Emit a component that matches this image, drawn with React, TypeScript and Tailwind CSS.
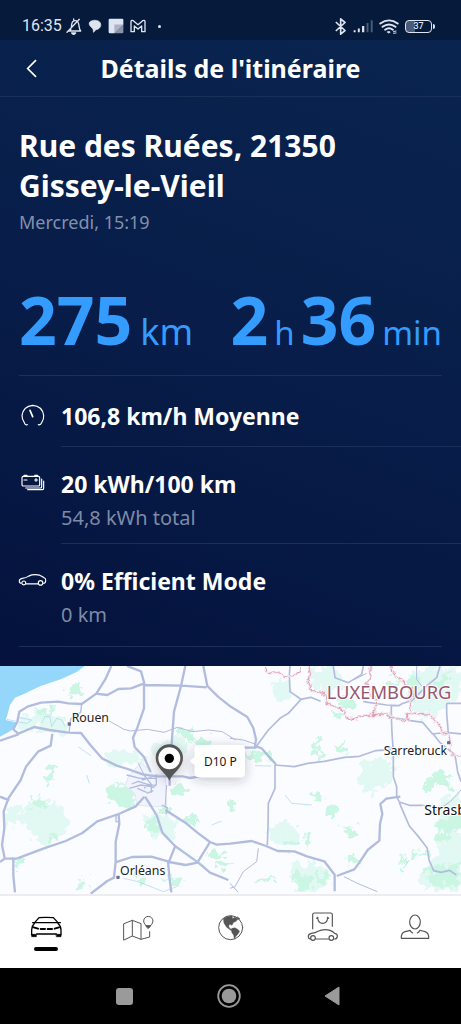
import type { ReactNode } from "react";

type IconProps = { box: string; className: string; children: ReactNode; stroke?: number };

function Icon({ box, className, children, stroke = 4 }: IconProps) {
  return (
    <svg
      viewBox={box}
      className={className}
      fill="none"
      stroke="currentColor"
      strokeWidth={stroke}
      strokeLinecap="round"
      strokeLinejoin="round"
      aria-hidden="true"
    >
      {children}
    </svg>
  );
}

function StatusBar() {
  return (
    <div className="flex h-10 items-center justify-between bg-[#061a3b] pt-3 pr-[26px] pl-[22px] font-[Roboto,sans-serif] text-[#dfe5f0]">
      <div className="flex items-center">
        <span className="text-[16px] leading-5">16:35</span>
        <Icon box="196 52 48 51" className="ml-1 h-[17px] w-4" stroke={4}>
          <path d="M204 91h34M208 91c5-7 4-13 5-20 1-7 5-11 11-11 8 0 10 7 11 15 1 7 1 12 5 16M219 57v-2M199 95L236 56" />
          <path d="M213 97h12l-6 5z" fill="currentColor" />
        </Icon>
        <Icon box="262 56 42 42" className="ml-[6px] size-[14px]" stroke={2}>
          <path d="M272 80c-8-4-9-16 0-18 8-4 23-3 27 6 5 10-4 20-14 20-2 4-4 6-7 8 1-6-1-11-6-16z" fill="currentColor" />
        </Icon>
        <Icon box="322 52 50 50" className="ml-[6px] size-4" stroke={0}>
          <path d="M328 54h38q4 0 4 4v14L342 100h-14q-4 0-4-4V58q0-4 4-4z" fill="currentColor" />
          <path d="M370 72L342 100h24q4 0 4-4z" fill="#8893a8" />
          <path d="M342 72h28L342 100z" fill="#a9b3c4" />
        </Icon>
        <Icon box="388 56 48 42" className="ml-[6px] h-[14px] w-4" stroke={4}>
          <path d="M391 94V63q1-5 7-2l14 12 14-12q6-3 7 2v31h-10V77l-11 9-11-9v17z" />
        </Icon>
        <span className="ml-3 size-[3px] rounded-full bg-[#dfe5f0]" />
      </div>
      <div className="flex items-center gap-[6px]">
        <Icon box="314 52 36 50" className="h-[17px] w-3" stroke={5}>
          <path d="M318 65l26 24-13 11V54l13 11-26 24" />
        </Icon>
        <Icon box="365 56 62 42" className="h-[14px] w-5" stroke={0}>
          <path d="M367 90h6v6h-6zM380 85h6v11h-6zM393 77h7v19h-7z" fill="currentColor" />
          <path d="M407 68h6v28h-6zM420 59h6v37h-6z" fill="#4b5c7a" />
        </Icon>
        <Icon box="442 54 62 46" className="h-[15px] w-5" stroke={6}>
          <path d="M446 68q27-20 54 0M453 78q20-15 40 0M461 87q12-9 24 0" />
          <path d="M468 94l5 4 4-4q-4-4-9 0z" fill="currentColor" strokeWidth={2} />
          <path d="M487 93l8-2M487 98l8-1" strokeWidth={3} />
        </Icon>
        <span className="flex items-center">
          <span className="flex h-[13px] w-[27px] items-center justify-center rounded-[4px] border border-[#dfe5f0] bg-gradient-to-r from-[#4b5c7a] from-35% to-transparent to-35% text-[9px] leading-[11px] font-medium">
            37
          </span>
          <span className="ml-px h-[5px] w-[2px] rounded-r bg-[#dfe5f0]" />
        </span>
      </div>
    </div>
  );
}

function Row({ icon, title, detail, last }: { icon: ReactNode; title: string; detail?: string; last?: boolean }) {
  return (
    <li className="flex">
      <div className={detail ? "flex w-[61px] shrink-0 pt-[22px] pl-[18px]" : "flex w-[61px] shrink-0 pt-[26px] pl-[18px]"}>
        <div className="flex h-[26px] w-[29px] items-center justify-center">{icon}</div>
      </div>
      <div
        className={
          last
            ? "grow pt-[19px] pb-[18px]"
            : detail
              ? "grow border-b border-[#1c2f58] pt-[19px] pb-3"
              : "grow border-b border-[#1c2f58] pt-[22px] pb-3"
        }
      >
        <h2 className="text-[23px] leading-9 font-bold text-white">{title}</h2>
        {detail && <p className="mt-[3px] text-[20px] leading-[26px] text-[#7e8aa6]">{detail}</p>}
      </div>
    </li>
  );
}

function TripMap() {
  return (
    <section aria-label="Carte" className="bg-[#fbfcff]">
      <svg viewBox="0 18 1383 684" className="block w-full font-['Noto_Sans',sans-serif]" role="img" aria-label="Carte du trajet">
        <defs>
          <filter id="rough" x="0" y="0" width="1" height="1">
            <feTurbulence type="fractalNoise" baseFrequency="0.04" numOctaves="4" seed="4" />
            <feDisplacementMap in="SourceGraphic" scale="60" xChannelSelector="R" yChannelSelector="G" />
          </filter>
          <filter id="jagged" x="0" y="0" width="1" height="1">
            <feTurbulence type="fractalNoise" baseFrequency="0.06" numOctaves="3" seed="9" />
            <feDisplacementMap in="SourceGraphic" scale="22" xChannelSelector="R" yChannelSelector="G" />
          </filter>
          <filter id="shade" x="-40%" y="-40%" width="180%" height="190%">
            <feDropShadow dx="0" dy="8" stdDeviation="16" floodColor="#334" floodOpacity="0.28" />
          </filter>
        </defs>
        <rect y="18" width="1383" height="684" fill="#fbfcff" />
        <path d="M0 18h254l-24 18-44 20-66 23-47 22-28 12-15 22-8 30-5 15 36 8-20 24-33 18z" fill="#94d7fb" />
        <g filter="url(#rough)">
          <g fill="#e2f8f2">
            <path d="M70 172l50-18 65 12 27 25v28l-50 2-50-16-60 10 8-28z" />
            <path d="M310 285l45-20 55 8 24 28-40 16-70-4z" />
            <path d="M60 460l40-40 50 0 45 30 10 50-35 45-45 12-40-50z" />
            <path d="M425 470l40-15 60 20 8 45-30 15-40-10-20-30z" />
            <path d="M930 25l80 0 30 40-40 35-50-15-30-30z" />
            <path d="M1090 310l40-20 50 10-4 70-60 30-40-30z" />
            <path d="M805 510l50-25 40 20 5 50-50 10-45-25z" />
            <path d="M880 620l50-20 60 35 5 50-100 10-25-40z" />
            <path d="M1230 40l80-20 70 10v70l-90 80-60-40z" />
            <path d="M1300 440l83-50v300h-110l-10-60 60-60z" />
            <path d="M815 75l40-20 20 30-10 35-50-5z" />
            <path d="M10 450l50-15 10 50-50 15z" />
            <path d="M450 260l60-30 65 15-20 40-80 15z" />
          </g>
          <g fill="#cbf6e3">
            <path d="M205 65l30-5 5 30 20 15-30 10-20-20zM100 145l40-5 20 20-30 10zM150 310l15 5 5 50-28 10-8-25zM320 380l70-5 25 50-50 15-50-25zM90 420l35-8 10 20-30 20zM510 375l40 5 15 20-45 10zM540 205l40 0 5 25-45 5zM550 480l25-20 20 22-40 20zM435 490l25-10 20 25-30 15z" />
            <path d="M40 600l30-5 3 25-28 5zM145 525l35 0 5 20-35 5zM230 650l35 5-5 25-30-10zM640 610l45-5 10 15-50 5zM570 240l60-5 20 30-40 10zM470 440l30-10 15 20-20 15zM400 640l20 10 20 25-20 5zM620 580l60-10 10 10-50 20zM490 650l60 15-30 20z" />
            <path d="M740 280l50-10 20 25-55 15zM690 425l15-10 10 25-20 20zM940 235l20 15 6 45-20-10zM1000 155l35-5 10 15-40 10zM1010 255l20-5 12 45-25-15zM930 395l35 0 5 25-30 5zM990 440l20 5-10 40-20-20zM1020 500l40 0 20 25-35 5zM920 515l15 10-5 45-12-10zM770 658l55-5 5 10-50 5zM1040 590l30 0 10 30-30-5z" />
            <path d="M1020 110l45 10-20 30-30-20zM1170 50l25 5-10 30-20-10zM1220 70l30-20 10 30-30 15zM1300 60l50-20-20 60-40 20zM1270 370l50-40 35 10-10 40-40-5-20 30zM1310 500l73-60v60l-60 40zM1270 620l100-10 10 70-80 0zM1200 600l20-20-10 45-20-5zM1250 575l30 0 0 15-30 0zM880 650l40-20 15 50-45 0zM940 635l50 15-20 35-20-20zM850 540l40 0 5 15-40 5z" />
          </g>
        </g>
        <path d="M385 350l35-40 25 15 15 20 35-5 5 100-40 0-50-5-5-35-30-20z" fill="#f1f4fc" stroke="#d5ddf0" strokeWidth="2" />
        <g fill="none" stroke="#b2bcde" strokeWidth="7" strokeLinejoin="round">
          <path d="M334 18l-17 38-28 45-44 31-40-2-30-5-52 3-41 12-24 15-6 30-12 23 15 13 48-20 45 9 57 8 38 1 28 36 35 40 44 22 33 10 45 16 40 6h80l22 5 30-5 45-30M0 242l55-19M287 101l35 4 33-18 38-2 40-15-10-36-42-16M432 70l0 75-20 58-13 30 5 28 28 30 20 45M430 75l115 2 75 5M556 18l-13 60-21 77-8 110-5 60v52M610 18l12 60 32 32 34 27 54 34 18 33 8 34-3 20 20 7 18 21 25 27M672 263l97 0" />
          <path d="M157 222l-5 35-38 18-36 45-16 40-37 55-14 40 2 50-7 50 8 40 37 1M0 410l28 11M0 606l15-11M40 597l0 50 5 50M52 595l80-30 65-22 50-24 45-35 64-22 50-22 27-30M356 462l2 30-11 53v60l-5 48-20 10-50 38M346 607l50-16 58-1 50 14 4 45 6 48M435 410l18 28 18 30 16 50 38 40 70 50 35 30 55 22M525 560l-18 45M507 606l50 9 35-7 38-62-38-28-36-30-60-38M630 546l20 8 40-3 65-8 43 15 35 15 50 1 38 15 52 15 31 40 0 50M1010 648l53-20 15-20 25-38 35-28 2-50 7-30-6-30 18-16 42-6" />
          <path d="M825 315l58 5 40-10 50-6 60-12 45-3 48-17 50-3M825 315v70l-20 45-1 70-2 55M1167 266l12-5-3-40-2-50 0-35M1180 260v90l10 30v30l8 16 30 10h40M1198 428l15 35 15 35 30 35 24 32 5 35 14 32 22 5 26-6 20 14M765 265l40-55 35-35 25-15 38-42M906 120l-36-25-2-50 2-27M902 118l30-6 30 12M1000 18l5 35 40 15 40-25 5-25M1090 125l70 10 36 2 10-6 24-8M1174 172l58 10 36 5 30 35 40-5 50 5M1340 130l0 30 5 60M1298 220l22 28 25 20 20 17 8 50 10 30M1340 130l43 0M1320 18l-10 35-25 20-55 55" strokeWidth="5" />
          <path d="M380 345l40 10 50 0M388 385l35-10 30 5M395 372l20-8 30 10 25 2M432 385l14-12 14 10 9-10v-30M432 345l22 28 0 25M440 400l20-8M425 360l30-8M412 385l28 12M485 435l17 8-4 20M348 465l0 20 10 0M245 132l-3 25-30 20-5 42" strokeWidth="4" />
          <path d="M322 180l50 28 20 5 50-5 50 9 40-15 45 13 50-5 40 5 40 25M690 235l40 5 35 12M500 375l-5 70M415 310l20 40M775 565l-5 40-40 30-25 45-15 5M1032 650l40 20 60 25M1268 435l50 12 30-20 10-10 25-27M1100 40l-40 20M1250 18l0 40 15 20M690 670l25 27" strokeWidth="3" />
        </g>
        <g fill="none" stroke="#a6d3ee" strokeWidth="2">
          <path d="M20 178l60 12 15-10-40-8M125 190l10-20 15 0 5 30 15-25 15 5 10 20M235 260l20 15 18 12M260 345l8 25M370 655l45 10 75 30 40-15M635 495l30-12M1210 625l18-25M855 405l20 25 60 5M765 317l48 1M535 565l80 55" />
        </g>
        <g fill="none" strokeLinejoin="round" filter="url(#jagged)">
          <path d="M792 18l10 22 30-1 20 10 50-10-2-18M925 18l5 20-6 25 10 28 40 10 10 35 40 8 20 30 15 5 50-15 45-2 20 10 48 10 4-18 16-8 50 10 25 30 10 20 20 15 10 25M1110 18l0 35-10 15 12 35 18 20-8 40M1170 18l15 25 20 20 30 25-2 30-5 40-10 15M1350 260l10 25 23 5" stroke="#f6e3ec" strokeWidth="9" />
          <path d="M792 18l10 22 30-1 20 10 50-10-2-18M925 18l5 20-6 25 10 28 40 10 10 35 40 8 20 30 15 5 50-15 45-2 20 10 48 10 4-18 16-8 50 10 25 30 10 20 20 15 10 25M1110 18l0 35-10 15 12 35 18 20-8 40M1170 18l15 25 20 20 30 25-2 30-5 40-10 15M1350 260l10 25 23 5" stroke="#dba0b6" strokeWidth="3" />
        </g>
        <g fill="#6f7191">
          <rect x="203" y="187" width="10" height="10" rx="2" />
          <rect x="349" y="647" width="10" height="10" rx="2" />
          <rect x="1341" y="243" width="10" height="10" rx="2" />
        </g>
        <g fill="#222" stroke="#fff" strokeWidth="6" paintOrder="stroke" fontSize="37">
          <text x="215" y="186">Rouen</text>
          <text x="360" y="646">Orléans</text>
          <text x="1151" y="284">Sarrebruck</text>
          <text x="1273" y="466" fill="#111" fontSize="42">Strasbourg</text>
          <text x="980" y="117" fill="#965672" fontSize="55">LUXEMBOURG</text>
        </g>
        <path d="M508 362c-8-22-41-37-41-68a41 41 0 0 1 82 0c0 31-33 46-41 68z" fill="#555" filter="url(#shade)" />
        <circle cx="508" cy="295" r="33" fill="#fff" />
        <circle cx="508" cy="295" r="14" fill="#000" />
        <path d="M570 303l14-13v-23q0-12 12-12h127q12 0 12 12v73q0 12-12 12H596q-12 0-12-12v-24z" fill="#fff" filter="url(#shade)" />
        <text x="612" y="318" fill="#1a1a1a" fontSize="36">D10 P</text>
      </svg>
    </section>
  );
}

function TabBar() {
  const tabs = [
    {
      label: "Véhicule",
      icon: (
        <Icon box="90 75 99 72" className="h-6 w-[33px]" stroke={4}>
          <path d="M104 98l13-15q22-2 43 0l14 15M98 98h83M104 99q-9 9-9 20v15M173 99q10 9 10 20v15M110 132h59" />
          <path d="M95 133h14v7H96zM169 133h14v7h-13z" fill="currentColor" strokeWidth="2" />
          <path d="M101 112l13 4M177 112l-13 4M122 117h13M143 117h13" strokeWidth="6" />
        </Icon>
      ),
    },
    {
      label: "Carte",
      icon: (
        <Icon box="369 66 99 84" className="h-7 w-[33px]" stroke={3}>
          <path d="M375 98l25-10 26 10 0 47-26-10-25 12zM400 88v47M426 145l26-7v-16M448 110l-10-10a14 14 0 1 1 20 0z" />
          <path d="M441 104h14l-7 8z" fill="currentColor" />
        </Icon>
      ),
    },
    {
      label: "Explorer",
      icon: (
        <Icon box="651 70 81 81" className="size-[27px]" stroke={3}>
          <circle cx="692" cy="111" r="36" />
          <path d="M670 84q12-9 26-8l2 8 6-5 8 5-3 8-8 3-5 9-7-3-3 6 4 7 8 2 3 6-9-3-12-9-8-12z" fill="currentColor" strokeWidth="1" />
          <path d="M696 113l9-2 8 5 6 6-5 8-6 7-5 8-2-11-6-9zM712 78l8 6-8 3z" fill="currentColor" strokeWidth="1" />
        </Icon>
      ),
    },
    {
      label: "Boutique",
      icon: (
        <Icon box="228 70 99 90" className="h-[30px] w-[33px]" stroke={3.5}>
          <path d="M248 120V78q0-5 5-5h49q5 0 5 5v35M263 88q2 16 15 16t15-16M260 89l4-3M292 86l4 3M241 151q-6 0-6-8 0-7 9-9 13-1 20-6 16-8 36-3 9 3 14 9 9 2 8 9-1 8-8 8M257 151h38" />
          <circle cx="249" cy="148" r="7" />
          <circle cx="304" cy="148" r="7" />
        </Icon>
      ),
    },
    {
      label: "Profil",
      icon: (
        <Icon box="507 70 96 84" className="h-7 w-8" stroke={3.5}>
          <ellipse cx="555" cy="97" rx="16" ry="21" />
          <path d="M548 130q-6-3-8-8-8 3-15 4-12 4-11 20h82q1-16-11-20-8-1-15-4-2 5-8 8" />
        </Icon>
      ),
    },
  ];
  return (
    <nav className="flex h-[74px] border-t-2 border-[#ededf0] bg-white">
      {tabs.map((tab, i) => (
        <button
          key={tab.label}
          aria-label={tab.label}
          aria-current={i === 0 ? "page" : undefined}
          className={i === 0 ? "flex flex-1 flex-col items-center pt-[15px] text-black" : "flex flex-1 flex-col items-center pt-[15px] text-[#555]"}
        >
          <span className="flex h-8 items-center">{tab.icon}</span>
          {i === 0 && <span className="mt-1 h-1 w-6 rounded-full bg-black" />}
        </button>
      ))}
    </nav>
  );
}

export default function App() {
  return (
    <div className="flex min-h-screen flex-col bg-black font-['Noto_Sans',sans-serif]">
      <StatusBar />
      <main className="bg-linear-200 from-[#09254f] via-[#081d49] to-[#04123d]">
        <header className="relative flex h-[57px] items-center justify-center border-b border-[#193159]">
          <button aria-label="Retour" className="absolute left-4 flex size-8 items-center justify-center text-white">
            <Icon box="75 176 42 62" className="h-[21px] w-[14px]" stroke={5}>
              <path d="M108 182L83 207l25 25" strokeLinecap="butt" strokeLinejoin="miter" />
            </Icon>
          </button>
          <h1 className="text-[25px] leading-8 font-bold text-white">Détails de l'itinéraire</h1>
        </header>
        <section className="px-[19px] pt-[29px]">
          <p className="max-w-[360px] text-[30px] leading-10 font-bold text-white">Rue des Ruées, 21350 Gissey-le-Vieil</p>
          <p className="mt-[2px] text-[18px] leading-7 text-[#8390ac]">Mercredi, 15:19</p>
        </section>
        <section className="mx-[19px] flex items-baseline justify-between border-b border-[#1c3059] pt-[41px] leading-[84px] text-[#349cff]">
          <p className="flex items-baseline gap-2">
            <span className="text-[66px] font-bold">275</span>
            <span className="text-[36px]">km</span>
          </p>
          <p className="flex items-baseline gap-[6px]">
            <span className="text-[66px] font-bold">2</span>
            <span className="text-[33px]">h</span>
            <span className="text-[66px] font-bold">36</span>
            <span className="text-[33px]">min</span>
          </p>
        </section>
        <ul className="text-white">
          <Row
            title="106,8 km/h Moyenne"
            icon={
              <Icon box="60 39 78 72" className="h-6 w-[26px]" stroke={3.5}>
                <path d="M82 104q-7 2-9-6-7-9-7-22 4-27 32-30 29 2 33 30 1 13-6 22-3 8-10 6" />
                <path d="M90 61l8 19" strokeWidth="5" />
              </Icon>
            }
          />
          <Row
            title="20 kWh/100 km"
            detail="54,8 kWh total"
            icon={
              <Icon box="60 245 78 57" className="h-[19px] w-[26px]" stroke={3.5}>
                <path d="M70 255h45q4 0 4 4v21q0 4-4 4H70q-4 0-4-4v-21q0-4 4-4zM72 252h9M104 252h9M72 266h9M104 266h9M108 262v8M77 290h44q4 0 4-4v-23M83 295h44q4 0 4-4v-22" />
              </Icon>
            }
          />
          <Row
            last
            title="0% Efficient Mode"
            detail="0 km"
            icon={
              <Icon box="54 544 90 45" className="h-[15px] w-[30px]" stroke={3.5}>
                <path d="M64 578q-6 0-6-7 0-6 9-8 12-1 20-7 15-7 34-3 9 4 14 8 6 2 5 9 0 8-7 8M79 580h37" />
                <circle cx="72" cy="577" r="6" />
                <circle cx="124" cy="577" r="7" />
              </Icon>
            }
          />
        </ul>
        <div className="mx-[19px] h-5 border-t border-[#1c2f58]" />
      </main>
      <TripMap />
      <TabBar />
      <div className="flex min-h-14 grow items-center justify-center bg-black pr-1 text-[#9a9a9a]">
        <button aria-label="Applications récentes" className="flex w-26 justify-center">
          <span className="size-[17px] rounded-[3px] bg-current" />
        </button>
        <button aria-label="Accueil" className="flex w-26 justify-center">
          <svg viewBox="0 0 24 24" className="size-6" aria-hidden="true">
            <circle cx="12" cy="12" r="10.8" fill="none" stroke="currentColor" strokeWidth="1.8" />
            <circle cx="12" cy="12" r="7.3" fill="currentColor" />
          </svg>
        </button>
        <button aria-label="Précédent" className="flex w-26 justify-center">
          <svg viewBox="0 0 17 20" className="h-5 w-[17px]" aria-hidden="true">
            <path d="M15 1v18L1 10z" fill="currentColor" stroke="currentColor" strokeLinejoin="round" />
          </svg>
        </button>
      </div>
    </div>
  );
}
